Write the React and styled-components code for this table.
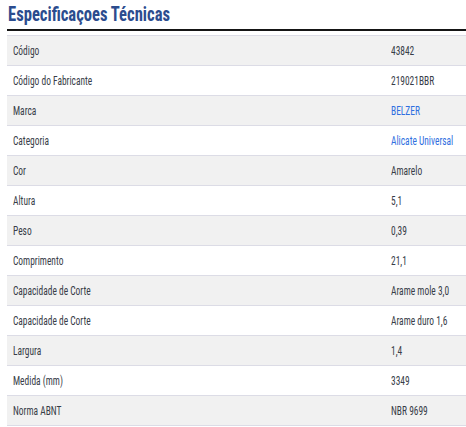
import React from "react";
import styled, { createGlobalStyle } from "styled-components";

const Global = createGlobalStyle`
  html, body { margin: 0; padding: 0; background: #fff; }
  body { font-family: "Roboto Condensed", "Roboto", "Liberation Sans", sans-serif; font-stretch: 75%; }
`;

const Wrap = styled.div`
  padding: 0 0 0 7px;
  width: 459px;
  overflow: hidden;
`;

const Title = styled.h2`
  margin: 0;
  padding: 3px 0 0 1px;
  height: 31px;
  box-sizing: border-box;
  font-family: "Roboto Condensed", "Roboto", sans-serif;
  font-stretch: 75%;
  font-size: 21px;
  font-weight: 700;
  color: #2b4c8e;
  border-bottom: 2px solid #151515;
  line-height: 22px;
  white-space: nowrap;
`;

const TitleText = styled.span`
  display: inline-block;
  transform: scaleX(0.79);
  transform-origin: left center;
`;

const Table = styled.div`
  margin-top: 4px;
  border-top: 1px solid #dcdce6;
`;

const Row = styled.div`
  display: grid;
  grid-template-columns: 384px 1fr;
  height: 29px;
  align-items: center;
  background: ${(p) => (p.$alt ? "#fff" : "#f1f1f1")};
  border-bottom: 1px solid #dcdce6;
  font-family: "Roboto Condensed", "Roboto", sans-serif;
  font-stretch: 75%;
  font-size: 13px;
  color: #383d48;
  white-space: nowrap;
`;

const Cell = styled.div`
  padding-left: ${(p) => (p.$first ? "6px" : "0")};
  overflow: visible;
`;

const Text = styled.span`
  display: inline-block;
  transform: scaleX(0.725);
  transform-origin: left center;
  color: ${(p) => (p.$link ? "#2f6fe0" : "#383d48")};
`;

const specs = [
  ["Código", "43842"],
  ["Código do Fabricante", "219021BBR"],
  ["Marca", "BELZER", true],
  ["Categoria", "Alicate Universal", true],
  ["Cor", "Amarelo"],
  ["Altura", "5,1"],
  ["Peso", "0,39"],
  ["Comprimento", "21,1"],
  ["Capacidade de Corte", "Arame mole 3,0"],
  ["Capacidade de Corte", "Arame duro 1,6"],
  ["Largura", "1,4"],
  ["Medida (mm)", "3349"],
  ["Norma ABNT", "NBR 9699"],
];

export default function App() {
  return (
    <>
      <Global />
      <Wrap>
        <Title>
          <TitleText>Especificaçoes Técnicas</TitleText>
        </Title>
        <Table>
          {specs.map(([k, v, link], i) => (
            <Row key={i} $alt={i % 2 === 1}>
              <Cell $first>
                <Text>{k}</Text>
              </Cell>
              <Cell>
                <Text $link={link}>{v}</Text>
              </Cell>
            </Row>
          ))}
        </Table>
      </Wrap>
    </>
  );
}
